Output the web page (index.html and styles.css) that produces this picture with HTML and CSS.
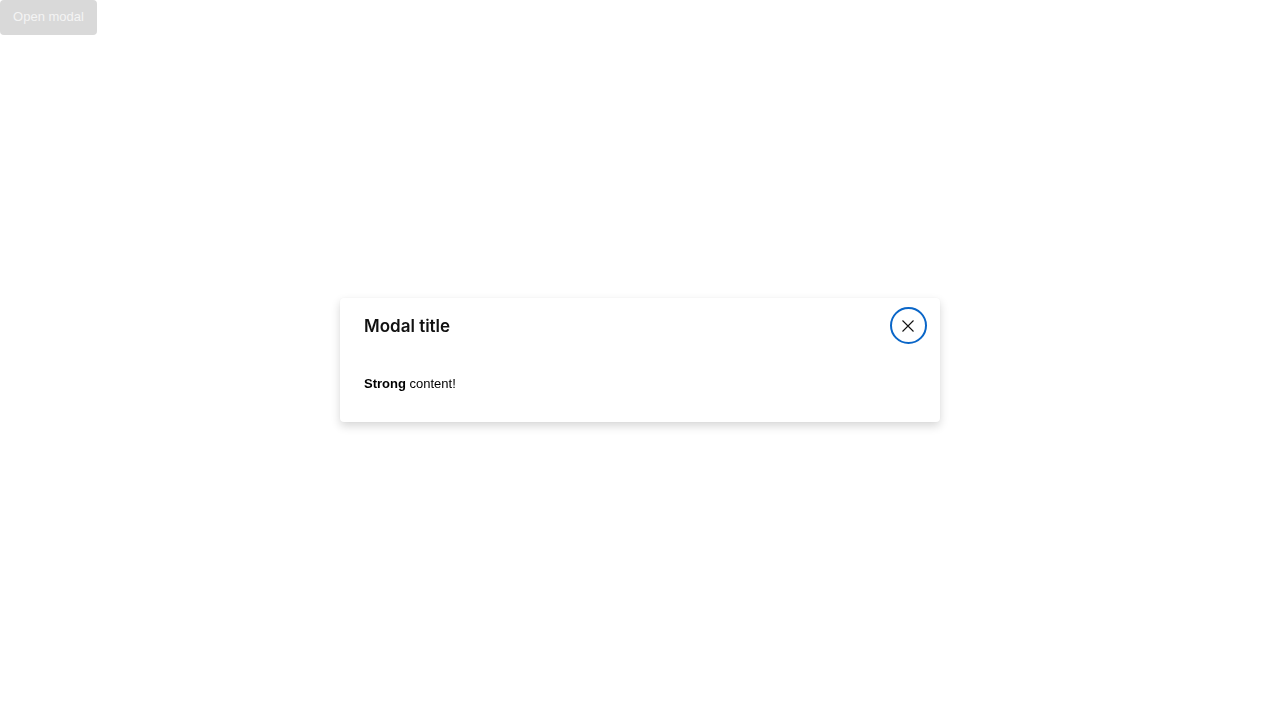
FILE: index.html
```html
<!DOCTYPE html>
<html>
<head>
<meta charset="utf-8">
<link rel="stylesheet" href="styles.css">
</head>
<body>
<button class="open-btn" disabled>Open modal</button>
<div class="overlay">
  <div class="modal" role="dialog">
    <div class="modal-header">
      <h2 class="modal-title">Modal title</h2>
      <button class="close-btn" aria-label="Close">
        <svg width="14" height="14" viewBox="0 0 14 14"><path d="M1.5 1.5 L12.5 12.5 M12.5 1.5 L1.5 12.5" stroke="#111" stroke-width="1.1" fill="none"/></svg>
      </button>
    </div>
    <div class="modal-body">
      <p><strong>Strong</strong> content!</p>
    </div>
  </div>
</div>
</body>
</html>
```
FILE: styles.css
```css
html, body {
  margin: 0;
  padding: 0;
  background: #fff;
  font-family: "Liberation Sans", Arial, sans-serif;
}
.open-btn {
  display: block;
  width: 97px;
  height: 35px;
  border: none;
  border-radius: 4px;
  background: #d9d9d9;
  color: #f4f4f4;
  font-family: "Liberation Sans", Arial, sans-serif;
  font-size: 13px;
  padding: 0 0 2px;
}
.overlay {
  position: fixed;
  inset: 0;
  display: flex;
  align-items: center;
  justify-content: center;
}
.modal {
  width: 600px;
  background: #fff;
  border-radius: 4px;
  box-shadow: 0 4px 10px rgba(0, 0, 0, 0.16), 0 0 2px rgba(0, 0, 0, 0.05);
}
.modal-header {
  height: 56px;
  display: flex;
  align-items: center;
  justify-content: space-between;
  padding: 0 13px 0 24px;
}
.modal-title {
  margin: 0;
  font-family: Inter, "Noto Sans", sans-serif;
  font-size: 17px;
  font-weight: 600;
  color: #111;
  position: relative;
  top: 0;
}
.close-btn {
  width: 37px;
  height: 37px;
  border-radius: 50%;
  border: 2px solid #0a66c8;
  background: #fff;
  display: flex;
  align-items: center;
  justify-content: center;
  padding: 0;
  position: relative;
  top: -1px;
}
.close-btn svg {
  display: block;
  margin: 2px 1px 0 0;
}
.modal-body {
  padding: 20px 24px 28px;
}
.modal-body p {
  margin: 0;
  font-size: 13px;
  line-height: 20px;
  color: #000;
}
.modal-body strong { font-weight: 700; }
```
